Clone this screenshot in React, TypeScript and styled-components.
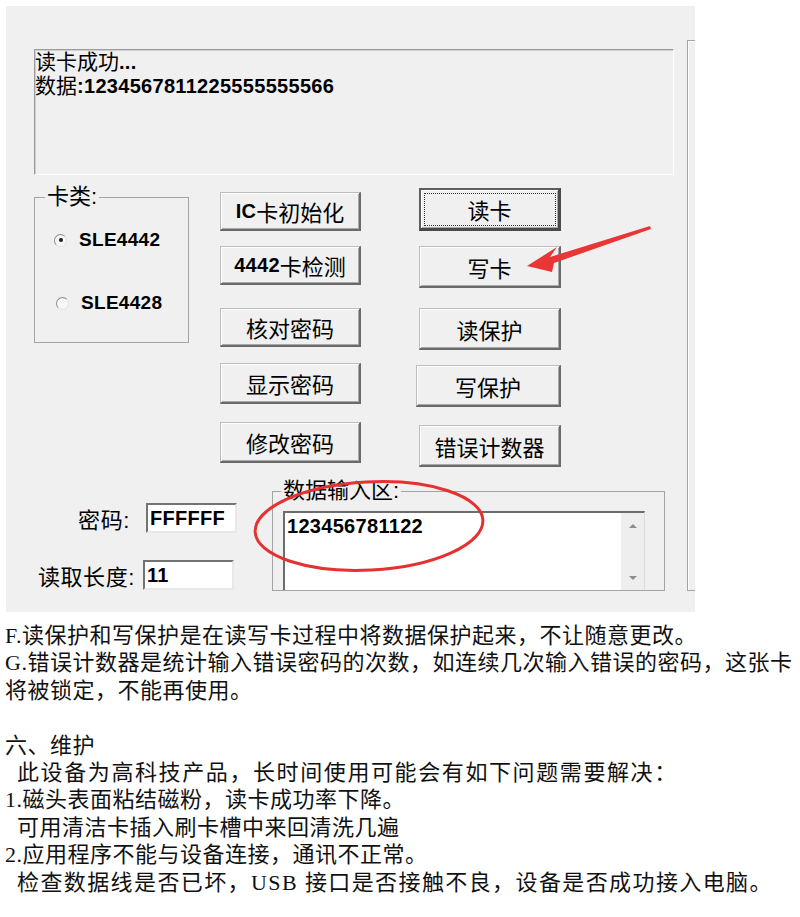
import React from 'react';
import styled, { createGlobalStyle } from 'styled-components';

const GlobalStyle = createGlobalStyle`
  html, body {
    margin: 0;
    padding: 0;
    background: #fff;
  }
  body {
    font-family: "Liberation Sans", "Noto Sans CJK SC", sans-serif;
  }
`;

const Page = styled.div`
  position: relative;
  width: 800px;
  height: 917px;
  overflow: hidden;
`;

/* ---- the dialog screenshot ---- */

const Dialog = styled.div`
  margin: 6px 0 0 6px;
  width: 689px;
  height: 606px;
  box-sizing: border-box;
  padding-left: 28px;
  display: flex;
  overflow: hidden;
  background: #f0f0f0;
  color: #000;
  font-family: "Liberation Sans", "Noto Sans CJK SC", sans-serif;
  font-size: 22px;
`;

const MainCol = styled.div`
  width: 640px;
  flex-shrink: 0;
  padding-top: 43px;
  display: flex;
  flex-direction: column;
`;

const OutputBox = styled.div`
  height: 126px;
  box-sizing: border-box;
  border: 1px solid;
  border-color: #9c9c9c #fff #fff #9c9c9c;
  box-shadow: inset 1px 1px 0 #cfcfcf;
  font-size: 21px;
  line-height: 23px;
`;

const Latin = styled.b<{ $size?: number }>`
  font-family: "Liberation Sans", Arial, sans-serif;
  font-weight: 700;
  font-size: ${(p) => p.$size ?? 20}px;
  letter-spacing: 0.3px;
`;

const MidRow = styled.div`
  margin-top: 7px;
  display: flex;
  align-items: flex-start;
`;

const GroupBox = styled.fieldset<{ $w: number; $h: number; $mt: number }>`
  margin: ${(p) => p.$mt}px 0 0 0;
  padding: 0;
  width: ${(p) => p.$w}px;
  height: ${(p) => p.$h}px;
  box-sizing: border-box;
  min-inline-size: 0;
  border: 1px solid #a4a4a4;
  flex-shrink: 0;
`;

const Legend = styled.legend<{ $ml: number }>`
  margin-left: ${(p) => p.$ml}px;
  padding: 0 2px;
  height: 24px;
  font-size: 22px;
  line-height: 24px;
`;

const RadioRow = styled.label<{ $mt: number; $ml: number }>`
  display: flex;
  align-items: center;
  gap: 12px;
  height: 20px;
  margin: ${(p) => p.$mt}px 0 0 ${(p) => p.$ml}px;
`;

const RadioDot = styled.span<{ $checked?: boolean }>`
  width: 13px;
  height: 13px;
  box-sizing: border-box;
  border-radius: 50%;
  border: 1.5px solid;
  border-color: #8a8a8a #e2e2e2 #e2e2e2 #8a8a8a;
  background: #f7f7f7;
  display: flex;
  align-items: center;
  justify-content: center;

  &::after {
    content: '';
    width: 4px;
    height: 4px;
    border-radius: 50%;
    background: ${(p) => (p.$checked ? '#1a1a1a' : 'transparent')};
  }
`;

const ButtonCol = styled.div<{ $w: number; $ml: number }>`
  width: ${(p) => p.$w}px;
  margin-left: ${(p) => p.$ml}px;
  flex-shrink: 0;
  display: flex;
  flex-direction: column;
`;

const Btn = styled.button<{ $h: number; $mt: number; $dx?: number; $focused?: boolean }>`
  height: ${(p) => p.$h}px;
  margin: ${(p) => p.$mt}px 0 0 ${(p) => p.$dx ?? 0}px;
  padding: 0;
  box-sizing: border-box;
  display: flex;
  align-items: center;
  justify-content: center;
  background: #f0f0f0;
  color: #000;
  font-family: "Liberation Sans", "Noto Sans CJK SC", sans-serif;
  font-size: 22px;
  border-style: solid;
  border-width: ${(p) => (p.$focused ? '2px 3px 3px 2px' : '1px 2px 2px 1px')};
  border-color: ${(p) =>
    p.$focused ? '#5e5e5e #4a4a4a #4a4a4a #5e5e5e' : '#bdbdbd #6a6a6a #6a6a6a #bdbdbd'};
  box-shadow: inset 1px 1px 0 #fff, inset -1px -1px 0 #a9a9a9;
  outline: ${(p) => (p.$focused ? '1px dotted #333' : 'none')};
  outline-offset: -6px;
`;

const BottomRow = styled.div`
  display: flex;
  align-items: flex-start;
`;

const LeftForm = styled.div`
  width: 238px;
  flex-shrink: 0;
  display: flex;
  flex-direction: column;
`;

const FieldRow = styled.div<{ $mt: number }>`
  margin-top: ${(p) => p.$mt}px;
  height: 30px;
  display: flex;
  align-items: center;
`;

const FieldLabel = styled.span<{ $w: number }>`
  width: ${(p) => p.$w}px;
  flex-shrink: 0;
  text-align: right;
  font-size: 22px;
  letter-spacing: 0.6px;
  white-space: nowrap;
`;

const FieldInput = styled.div<{ $ml: number }>`
  margin-left: ${(p) => p.$ml}px;
  width: 91px;
  height: 30px;
  box-sizing: border-box;
  padding-left: 2px;
  display: flex;
  align-items: center;
  background: #fff;
  border: 2px solid;
  border-color: #737373 #e8e8e8 #e8e8e8 #737373;
`;

const TextArea = styled.div`
  margin: 8px 0 0 10px;
  width: 362px;
  height: 79px;
  box-sizing: border-box;
  display: flex;
  background: #fff;
  border-top: 2px solid #6c6c6c;
  border-left: 2px solid #6c6c6c;
  border-right: 1px solid #dcdcdc;
`;

const TextBody = styled.div`
  flex: 1;
  padding: 2px 0 0 2px;
  line-height: 22px;
`;

const ScrollBar = styled.div`
  width: 23px;
  padding: 11px 0 10px;
  box-sizing: border-box;
  display: flex;
  flex-direction: column;
  justify-content: space-between;
  align-items: center;
  background: #eeeeee;
`;

const ScrollArrow = styled.span<{ $down?: boolean }>`
  width: 0;
  height: 0;
  border-left: 4px solid transparent;
  border-right: 4px solid transparent;
  ${(p) => (p.$down ? 'border-top: 4px solid #8c8c8c;' : 'border-bottom: 4px solid #8c8c8c;')}
`;

const RightGroup = styled.div`
  margin: 34px 0 0 13px;
  width: 30px;
  height: 551px;
  flex-shrink: 0;
  box-sizing: border-box;
  border: 1px solid #a4a4a4;
  border-right: none;
  box-shadow: inset 1px 1px 0 #fff;
`;

/* ---- annotations drawn on top of the screenshot ---- */

const Marks = styled.svg`
  position: absolute;
  top: 0;
  left: 0;
  pointer-events: none;
`;

/* ---- manual text under the screenshot ---- */

const Notes = styled.div`
  margin-top: 10px;
  padding-left: 5px;
  font-family: "Liberation Serif", "Noto Sans CJK SC", serif;
  font-size: 22px;
  line-height: 27.4px;
  color: #111;
`;

const NoteLine = styled.div<{ $indent?: number; $spacing?: number }>`
  height: 27.4px;
  padding-left: ${(p) => p.$indent ?? 0}px;
  letter-spacing: ${(p) => p.$spacing ?? 0.5}px;
  white-space: pre;
`;

const leftButtons = [
  { key: 'init', label: <><Latin>IC</Latin>卡初始化</>, mt: 10, h: 39 },
  { key: 'check', label: <><Latin>4442</Latin>卡检测</>, mt: 15, h: 39 },
  { key: 'verify', label: '核对密码', mt: 23, h: 39 },
  { key: 'show', label: '显示密码', mt: 16, h: 41 },
  { key: 'change', label: '修改密码', mt: 18, h: 41 },
];

const rightButtons = [
  { key: 'read', label: '读卡', mt: 6, h: 43, focused: true },
  { key: 'write', label: '写卡', mt: 15, h: 42 },
  { key: 'rprot', label: '读保护', mt: 20, h: 42 },
  { key: 'wprot', label: '写保护', mt: 15, h: 42, dx: -3 },
  { key: 'errors', label: '错误计数器', mt: 18, h: 42 },
];

const notes: { text: string; indent?: number; spacing?: number }[] = [
  { text: 'F.读保护和写保护是在读写卡过程中将数据保护起来，不让随意更改。' },
  { text: 'G.错误计数器是统计输入错误密码的次数，如连续几次输入错误的密码，这张卡' },
  { text: '将被锁定，不能再使用。' },
  { text: '' },
  { text: '六、维护' },
  { text: '此设备为高科技产品，长时间使用可能会有如下问题需要解决：', indent: 12, spacing: 1.6 },
  { text: '1.磁头表面粘结磁粉，读卡成功率下降。' },
  { text: '可用清洁卡插入刷卡槽中来回清洗几遍', indent: 12 },
  { text: '2.应用程序不能与设备连接，通讯不正常。' },
  { text: '检查数据线是否已坏，USB 接口是否接触不良，设备是否成功接入电脑。', indent: 12, spacing: 1.4 },
];

export default function App() {
  return (
    <Page>
      <GlobalStyle />
      <Dialog>
        <MainCol>
          <OutputBox>
            <div>读卡成功<Latin>...</Latin></div>
            <div>数据<Latin>:1234567811225555555566</Latin></div>
          </OutputBox>

          <MidRow>
            <GroupBox $w={155} $h={158} $mt={3}>
              <Legend $ml={10}>卡类:</Legend>
              <RadioRow $mt={21} $ml={19}>
                <RadioDot $checked />
                <Latin $size={19}>SLE4442</Latin>
              </RadioRow>
              <RadioRow $mt={43} $ml={21}>
                <RadioDot />
                <Latin $size={19}>SLE4428</Latin>
              </RadioRow>
            </GroupBox>

            <ButtonCol $w={141} $ml={31}>
              {leftButtons.map((b) => (
                <Btn key={b.key} $h={b.h} $mt={b.mt}>{b.label}</Btn>
              ))}
            </ButtonCol>

            <ButtonCol $w={142} $ml={58}>
              {rightButtons.map((b) => (
                <Btn key={b.key} $h={b.h} $mt={b.mt} $dx={b.dx} $focused={b.focused}>
                  {b.label}
                </Btn>
              ))}
            </ButtonCol>
          </MidRow>

          <BottomRow>
            <LeftForm>
              <FieldRow $mt={36}>
                <FieldLabel $w={96}>密码:</FieldLabel>
                <FieldInput $ml={16}><Latin>FFFFFF</Latin></FieldInput>
              </FieldRow>
              <FieldRow $mt={27}>
                <FieldLabel $w={101}>读取长度:</FieldLabel>
                <FieldInput $ml={8}><Latin>11</Latin></FieldInput>
              </FieldRow>
            </LeftForm>

            <GroupBox $w={393} $h={112} $mt={12}>
              <Legend $ml={8}>数据输入区:</Legend>
              <TextArea>
                <TextBody><Latin>123456781122</Latin></TextBody>
                <ScrollBar>
                  <ScrollArrow />
                  <ScrollArrow $down />
                </ScrollBar>
              </TextArea>
            </GroupBox>
          </BottomRow>
        </MainCol>
        <RightGroup />
      </Dialog>

      <Notes>
        {notes.map((n, i) => (
          <NoteLine key={i} $indent={n.indent} $spacing={n.spacing}>{n.text}</NoteLine>
        ))}
      </Notes>

      <Marks width={800} height={917} viewBox="0 0 800 917">
        <ellipse
          cx={369}
          cy={526}
          rx={114}
          ry={44}
          transform="rotate(-3 369 526)"
          fill="none"
          stroke="#e5312f"
          strokeWidth={3}
        />
        <polygon
          points="527,266 557,247 550,257 650,226 651,229 554,263 552,272"
          fill="#ea3535"
        />
      </Marks>
    </Page>
  );
}
